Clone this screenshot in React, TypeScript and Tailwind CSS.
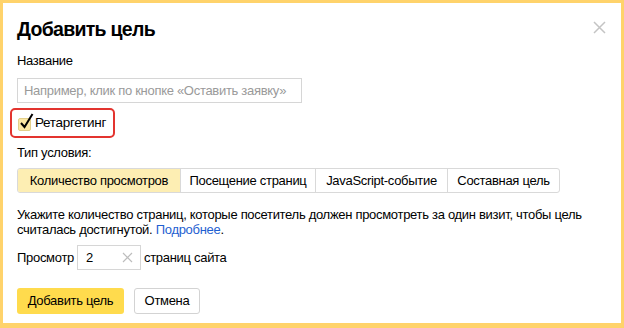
import React from 'react';

const tabs = ['Количество просмотров', 'Посещение страниц', 'JavaScript-событие', 'Составная цель'];

export default function App() {
  return (
    <div
      className="w-[624px] h-[328px] bg-white border-[#FFD36B] border-t-[3px] border-l-[3px] border-r-[3px] border-b-[5px] px-[14px] pt-[14px] text-black text-[13px] tracking-[-0.3px] overflow-hidden"
      style={{ fontFamily: '"Liberation Sans", Arial, sans-serif' }}
    >
      {/* header */}
      <div className="flex items-start justify-between">
        <h1 className="text-[19.5px] leading-[24px] font-bold tracking-[-0.7px]">Добавить цель</h1>
        <button className="mt-[4px] mr-[1px] text-[#c4c4c4]" aria-label="Закрыть">
          <svg width="13" height="13" viewBox="0 0 13 13" fill="none" stroke="currentColor" strokeWidth="1.5">
            <path d="M1 1L12 12M12 1L1 12" />
          </svg>
        </button>
      </div>

      <div className="mt-[12px] leading-[16px]">Название</div>
      <input
        className="mt-[9px] block w-[285px] h-[25px] border border-[#d6d6d6] px-[6px] text-[13px] tracking-[-0.3px] outline-none placeholder:text-[#9a9a9a]"
        placeholder="Например, клик по кнопке «Оставить заявку»"
      />

      {/* retargeting */}
      <div className="mt-[5px] -ml-[7px] w-[105px] h-[30px] border-2 border-[#e3342f] rounded-[5px] flex items-center pl-[6px] gap-[4px]">
        <span className="relative w-[13px] h-[13px] bg-[#fbe7a4] border border-[#e2cf8a] rounded-[2px] mt-[2px] shrink-0">
          <svg className="absolute -top-[6px] left-[0px]" width="16" height="17" viewBox="0 0 16 17" fill="none" stroke="#000" strokeWidth="2">
            <path d="M2 10L5.5 14L13.5 1" />
          </svg>
        </span>
        <span className="leading-[16px] text-[13.5px]">Ретаргетинг</span>
      </div>

      <div className="mt-[7px] leading-[16px]">Тип условия:</div>

      {/* tabs */}
      <div className="mt-[7px] flex h-[25px] w-fit border border-[#d9d9d9] rounded-[3px] overflow-hidden">
        {tabs.map((t, i) => (
          <div
            key={t}
            className={`flex items-center justify-center leading-none ${
              i === 0 ? 'w-[162px] bg-[#fdeeb3]' : 'border-l border-[#d9d9d9]'
            } ${i === 1 ? 'w-[135px]' : ''} ${i === 2 ? 'w-[132px]' : ''} ${i === 3 ? 'w-[112px]' : ''}`}
          >
            {t}
          </div>
        ))}
      </div>

      <p className="mt-[14px] leading-[15px] w-[590px]">
        Укажите количество страниц, которые посетитель должен просмотреть за один визит, чтобы цель
        <br />
        считалась достигнутой. <span className="text-[#1f5fd1]">Подробнее</span>.
      </p>

      <div className="mt-[8px] flex items-center gap-[3px]">
        <span>Просмотр</span>
        <div className="flex items-center w-[64px] h-[25px] border border-[#d6d6d6] pl-[8px] pr-[7px] justify-between">
          <span>2</span>
          <svg width="11" height="11" viewBox="0 0 11 11" fill="none" stroke="#bdbdbd" strokeWidth="1.2">
            <path d="M1 1L10 10M10 1L1 10" />
          </svg>
        </div>
        <span>страниц сайта</span>
      </div>

      <div className="mt-[18px] flex gap-[10px]">
        <button className="h-[26px] w-[107px] bg-[#ffdb4d] rounded-[3px] text-[13px]">Добавить цель</button>
        <button className="h-[26px] w-[66px] bg-white border border-[#d3d3d3] rounded-[3px] text-[13px]">Отмена</button>
      </div>
    </div>
  );
}
